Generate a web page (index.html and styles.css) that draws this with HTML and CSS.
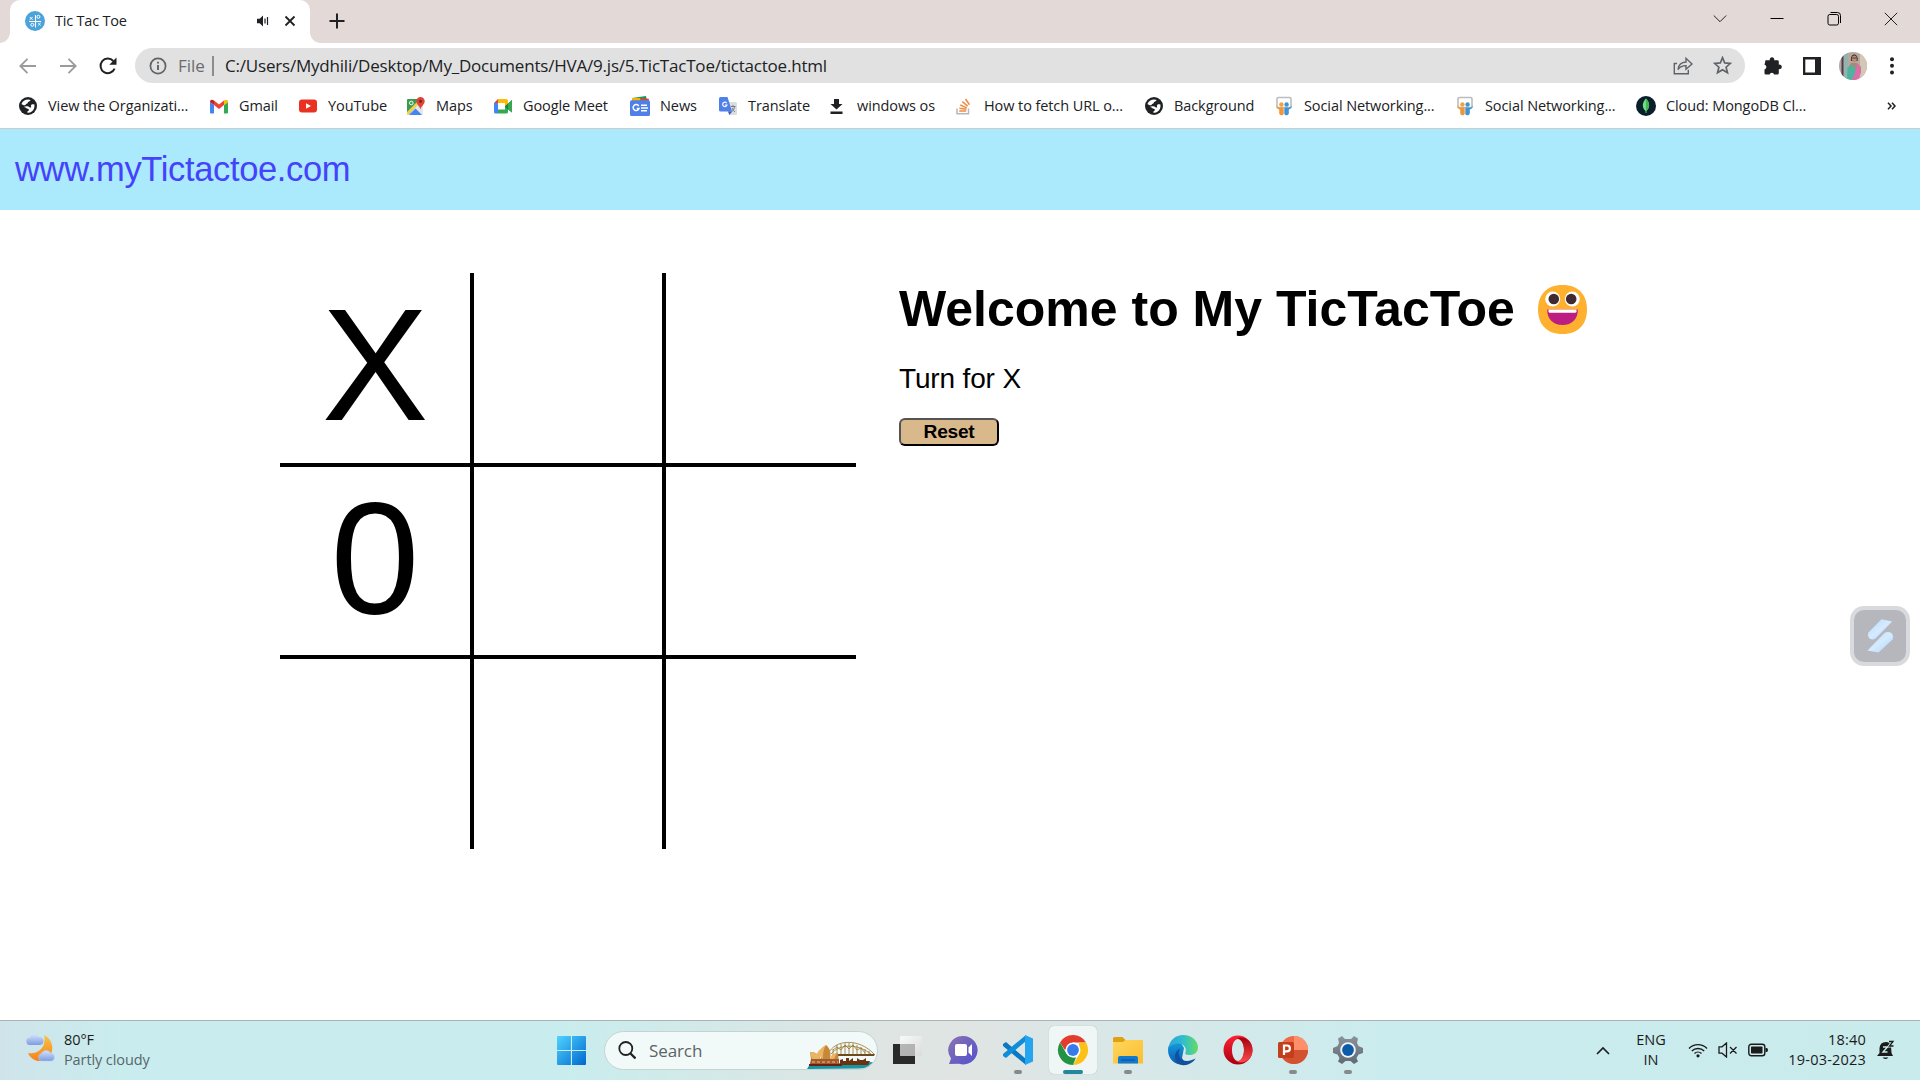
FILE: index.html
```html
<!DOCTYPE html>
<html lang="en">
<head>
<meta charset="utf-8">
<title>Tic Tac Toe</title>
<link rel="stylesheet" href="styles.css">
</head>
<body>
<svg class="defs" aria-hidden="true">
  <defs>
    <symbol id="globe" viewBox="0 0 18 18"><circle cx="9" cy="9" r="9" fill="#202124"/><path fill="#fff" d="M5.3 3.4C7 2.4 9.8 1.900 11.600 3c-.5 1.400-1.700 1.600-2.500 1.900-.5.700-.300 1.500-1.300 1.800C6.500 7 6.700 8.200 5.900 8.300 4.600 8.400 3 7.300 2.500 6.900c.5-1.400 1.500-2.700 2.800-3.500zM15.400 7.600c.600 2.800-.7 5.900-3 7.100-1 .7-2.500 1.200-4 1.100-.2-1.100.4-2 1.500-2.200.3-.8-.2-1.500-1.100-1.800-1.700-.3-2-1.900-4-1.900 1-.8 3-1 4.600-.4 1 .4 1.400 1.300 2.600 1 .6-.8-.3-1.300-.1-2.100.6-1 2.300-1.300 3.500-.8z"/></symbol>
    <symbol id="slides" viewBox="0 0 18 20"><rect x="2" y="1.500" width="14" height="10" rx="1.500" fill="#fff" stroke="#bdbdbd" stroke-width="1.600"/><circle cx="6.400" cy="8.500" r="2.200" fill="#f0a33c"/><circle cx="11.600" cy="8.500" r="2.200" fill="#3f94d1"/><path fill="#f0963a" d="M1 9.500c1 2 3 2.300 5 2.100h2.700V18c-1 2-4 1.500-4.500-.5v-4C2.500 13 1 12 1 9.500z"/><path fill="#3f94d1" d="M17 9.500c-1 2-3 2.300-5 2.100H9.300V18c1 2 4 1.500 4.500-.5v-4c1.700-.5 3.200-1.500 3.200-4z"/></symbol>
    <linearGradient id="win" x1="0" y1="0" x2="1" y2="1"><stop offset="0" stop-color="#4fd3ff"/><stop offset="1" stop-color="#0068ce"/></linearGradient>
    <linearGradient id="moon" x1="0" y1="0" x2="0" y2="1"><stop offset="0" stop-color="#f7c443"/><stop offset="1" stop-color="#f5821f"/></linearGradient>
    <linearGradient id="cloud" x1="0" y1="0" x2="0" y2="1"><stop offset="0" stop-color="#d3e1fb"/><stop offset="1" stop-color="#7d9ce0"/></linearGradient>
    <linearGradient id="pane" x1="0" y1="0" x2="1" y2="1"><stop offset="0" stop-color="#fff"/><stop offset="1" stop-color="#d9d9d9"/></linearGradient>
    <linearGradient id="chat" x1="0" y1="0" x2="1" y2="1"><stop offset="0" stop-color="#9373b8"/><stop offset=".35" stop-color="#7467b9"/><stop offset="1" stop-color="#5450cf"/></linearGradient>
    <linearGradient id="fold" x1="0" y1="0" x2="1" y2="1"><stop offset="0" stop-color="#ffd75e"/><stop offset="1" stop-color="#fbbd2f"/></linearGradient>
    <linearGradient id="edgeTop" x1="0" y1="0" x2="1" y2="0"><stop offset="0" stop-color="#2da2d8"/><stop offset=".5" stop-color="#30bdd0"/><stop offset="1" stop-color="#64dc61"/></linearGradient>
    <linearGradient id="edgeLow" x1="0" y1="0" x2="0" y2="1"><stop offset="0" stop-color="#159cdb"/><stop offset="1" stop-color="#0a5ab4"/></linearGradient>
    <linearGradient id="opera" x1="0" y1="0" x2="0" y2="1"><stop offset="0" stop-color="#ff2235"/><stop offset="1" stop-color="#a7000f"/></linearGradient>
    <linearGradient id="opera2" x1="0" y1="0" x2="0" y2="1"><stop offset="0" stop-color="#a3000b"/><stop offset="1" stop-color="#ff4b4c"/></linearGradient>
    <linearGradient id="gear" x1="0" y1="0" x2="0" y2="1"><stop offset="0" stop-color="#8a929b"/><stop offset="1" stop-color="#606a74"/></linearGradient>
    <linearGradient id="bolt" x1="0" y1="0" x2="1" y2="1"><stop offset="0" stop-color="#b5dcff"/><stop offset=".5" stop-color="#d5ebff"/><stop offset="1" stop-color="#aed2fa"/></linearGradient>
  </defs>
</svg>

<header class="browser">
  <div class="tabstrip">
    <div class="tab">
      <svg class="favicon" viewBox="0 0 20 20"><circle cx="10" cy="10" r="10" fill="#4ba3db"/><path d="M10.500 4v12.500M4 10.500h12" stroke="#fff" stroke-width="1.100"/><path d="M4.800 6l2.800 2.800M7.600 6L4.800 8.800M13.200 12l2.400 2.400m0-2.400l-2.400 2.400" stroke="#fff"/><circle cx="13.400" cy="5.800" r="1.500" fill="none" stroke="#fff"/><circle cx="7.300" cy="13.800" r="1.500" fill="none" stroke="#fff"/></svg>
      <span class="tab-title">Tic Tac Toe</span>
      <svg class="sound" viewBox="0 0 14 14"><path fill="#202124" d="M1 4.800h2.700L7 1.500v11L3.700 9.300H1z"/><path d="M9 4.500v5M11.500 3v8" stroke="#202124" stroke-width="1.200"/></svg>
      <svg class="close" viewBox="0 0 12 12"><path d="M1.500 1.500l9 9m0-9l-9 9" stroke="#202124" stroke-width="1.800"/></svg>
    </div>
    <svg class="newtab" viewBox="0 0 16 16"><path d="M8 .5v15M.5 8h15" stroke="#202124" stroke-width="2"/></svg>
    <div class="winctl">
      <svg viewBox="0 0 14 14"><path d="M.8 3.500L7 9.700l6.200-6.200" fill="none" stroke="#222" stroke-width="1"/></svg>
      <svg viewBox="0 0 14 14"><path d="M.5 6.500h13" stroke="#000"/></svg>
      <svg viewBox="0 0 14 14"><rect x="1" y="2.500" width="10.500" height="10.500" rx="1.800" fill="none" stroke="#000"/><path d="M3.500.5h7q3 0 3 3v7.500" fill="none" stroke="#000"/></svg>
      <svg viewBox="0 0 14 14"><path d="M.8.8l12.400 12.400M13.200.8L.8 13.200" stroke="#222"/></svg>
    </div>
  </div>

  <div class="toolbar">
    <div class="nav">
      <svg viewBox="0 0 18 18"><path d="M17 9H1.800M8.500 1.800L1.300 9l7.200 7.200" fill="none" stroke="#9b9b9b" stroke-width="1.800"/></svg>
      <svg viewBox="0 0 18 18"><path d="M1 9h15.200M9.500 1.800L16.700 9l-7.200 7.200" fill="none" stroke="#9b9b9b" stroke-width="1.800"/></svg>
      <svg viewBox="0 0 18 18"><path d="M15.600 11.700A7.300 7.300 0 1 1 14.300 4" fill="none" stroke="#202124" stroke-width="2"/><path fill="#202124" d="M17.500.6v7.200h-7.200z"/></svg>
    </div>
    <div class="omnibox">
      <svg class="info" viewBox="0 0 18 18"><circle cx="9" cy="9" r="7.600" fill="none" stroke="#5f6368" stroke-width="1.700"/><path d="M9 8v5M9 4.800v1.800" stroke="#5f6368" stroke-width="1.900"/></svg>
      <span class="scheme">File</span>
      <span class="divider"></span>
      <span class="url">C:/Users/Mydhili/Desktop/My_Documents/HVA/9.js/5.TicTacToe/tictactoe.html</span>
      <svg class="share" viewBox="0 0 20 19"><path d="M4 7.500H1.300v10.300h14v-4" fill="none" stroke="#5f6368" stroke-width="1.400"/><path d="M5 13.500c.6-5 3.500-7.300 8-7.500V2.300L19 8l-6 5.300V9.600c-3.500 0-6 1-8 3.900z" fill="none" stroke="#5f6368" stroke-width="1.400"/></svg>
      <svg class="star" viewBox="0 0 18 18"><path d="M9 1.600l2.100 5 5.400.4-4.100 3.600 1.300 5.300L9 13l-4.700 2.900 1.300-5.300L1.500 7l5.400-.4z" fill="none" stroke="#5f6368" stroke-width="1.600"/></svg>
    </div>
    <svg class="puzzle" viewBox="0 0 18 18"><path fill="#202124" d="M1.500 3.200h4.300a2.300 2.300 0 1 1 4.400 0h3.200q1.400 0 1.400 1.400v3.100a2.300 2.300 0 1 1 0 4.400v4q0 1.500-1.500 1.500h-3.200a2.300 2.300 0 0 0-4.500 0H1.900Q.5 17.600.5 16.200v-3.800a2.400 2.400 0 0 0 0-4.700z"/></svg>
    <svg class="panel" viewBox="0 0 18 18"><path fill="#202124" d="M0 0h18v18H0zM2.300 2.500v13H12v-13z" fill-rule="evenodd"/></svg>
    <svg class="avatar" viewBox="0 0 28 28"><clipPath id="av"><circle cx="14" cy="14" r="14"/></clipPath><g clip-path="url(#av)"><path fill="#b9a99c" d="M0 0h28v28H0z"/><path fill="#8fb5ac" d="M5 0h4v28H5z"/><path fill="#4d3c55" d="M2.500 0h2v28h-2z"/><path fill="#d3c7b8" d="M21 0h7v28h-7z"/><path fill="#a58a7c" d="M9 16l3-5h6l4 4v5H9z"/><path fill="#4db3a0" d="M8 28l.5-12 3.500-3 4 2 1 13z"/><path fill="#e06ba7" d="M13 28l4-10 1-6 3 2 1 7-3 7z"/><path fill="#33272a" d="M12 9c-1-9 8-8 6.500 0z"/><ellipse cx="15.300" cy="6.800" rx="2.600" ry="3.400" fill="#b98a76"/><path d="M12.500 6h5.500" stroke="#443338" stroke-width=".8"/></g></svg>
    <svg class="menu" viewBox="0 0 4 18"><g fill="#202124"><circle cx="2" cy="2.200" r="2"/><circle cx="2" cy="8.800" r="2"/><circle cx="2" cy="15.400" r="2"/></g></svg>
  </div>

  <nav class="bookmarks">
    <a class="bm"><svg viewBox="0 0 18 18"><use href="#globe"/></svg>View the Organizati...</a>
    <a class="bm"><svg viewBox="0 0 18 18"><path fill="#4285f4" d="M0 5l4 3v8.500H1.200Q0 16.500 0 15.300z"/><path fill="#34a853" d="M18 5l-4 3v8.500h2.800q1.200 0 1.200-1.200z"/><path fill="#ea4335" d="M4 3.600l5 3.800 5-3.800V8l-5 4-5-4z"/><path fill="#c5221f" d="M0 5c0-2.500 2-3 4-1.400V8L0 5z"/><path fill="#fbbc04" d="M18 5c0-2.500-2-3-4-1.400V8l4-3z"/></svg>Gmail</a>
    <a class="bm"><svg viewBox="0 0 18 18"><rect y="2.500" width="18" height="13" rx="3" fill="#ea3223"/><path fill="#fff" d="M7 6.200v5.600L12 9z"/></svg>YouTube</a>
    <a class="bm"><svg viewBox="0 0 18 18"><rect y="2" width="16" height="16" rx="1.500" fill="#e6e6e6"/><path fill="#3a9b50" d="M0 3q0-1 1-1h11v4L2 17H0z"/><path fill="#4285f4" d="M2 18l6.500-6.500L15 18z"/><path fill="#fbd04b" d="M0 15L11 4l1.500 2L1 17.700H0z"/><circle cx="4.300" cy="6" r="1.800" fill="none" stroke="#fff"/><path fill="#db4437" d="M13.500 0a4.200 4.200 0 0 1 4.200 4.200c0 3-3 4.300-4.200 8-1.200-3.700-4.200-5-4.200-8A4.200 4.200 0 0 1 13.500 0z"/><circle cx="13.500" cy="4.200" r="1.500" fill="#7b231e"/></svg>Maps</a>
    <a class="bm"><svg viewBox="0 0 18 18"><path fill="#ea4335" d="M0 6l4-4v4z"/><path fill="#fbbc04" d="M4 2h8q2 0 2 2v4l-3 1V6H4z"/><path fill="#4285f4" d="M0 6h4v10.500H1.500Q0 16.500 0 15z"/><path fill="#34a853" d="M4 12.500h7V9l3-1v7q0 1.500-2 1.500H4z"/><path fill="#188038" d="M11 9.200L18 3v12.500l-4-3.300z"/><path fill="#34a853" d="M14 7l4-4v12.500l-4-3.300z"/></svg>Google Meet</a>
    <a class="bm"><svg class="news" viewBox="0 0 20 20"><path fill="#0c9d58" d="M2 2l14-2 1 5H2z"/><path fill="#f4b400" d="M2 2h8l1 3H2z"/><path fill="#db4437" d="M11 2l8 .8L18.500 5H10z"/><rect y="4.200" width="20" height="15.800" rx="1.500" fill="#4f80ea"/><path d="M8.700 10a3 3 0 1 0 .3 2.500H6.800M11 9.300h6M11 12h7M11 14.700h6" fill="none" stroke="#fff" stroke-width="1.500"/></svg>News</a>
    <a class="bm"><svg viewBox="0 0 18 18"><path fill="#ddd" d="M7 5h9.500Q18 5 18 6.500v10q0 1.500-1.500 1.500H10z"/><path fill="#4f80ea" d="M1.500 0h7L13 14.500H1.500Q0 14.500 0 13V1.500Q0 0 1.500 0z"/><path d="M7.800 6.200A2.200 2.200 0 1 0 8 8H6" fill="none" stroke="#f7f7f7" stroke-width="1.200"/><path d="M12 9.500h4.500M14 8v1.500M12.500 15c2-1.500 2.800-3.500 3-5.500M13 11c.5 1.500 2 3 3 4" fill="none" stroke="#727d88"/><path fill="#2e5bc2" d="M9 14.500h4L10.500 18z"/></svg>Translate</a>
    <a class="bm"><svg viewBox="0 0 18 18"><path fill="#202124" d="M6 2h5v5h3.500l-6 5.500-6-5.500H6zM2.500 14.500h12V17h-12z"/></svg>windows os</a>
    <a class="bm"><svg viewBox="0 0 18 18"><path d="M2 11.500v5.300h11.500v-5.300" fill="none" stroke="#b5b7ba" stroke-width="1.500"/><path d="M4.200 14h7M4.400 11.200l7 1M5.300 8l6.500 2.900M7.300 4.700l5.400 4.500M10.500 2l4 5.800" stroke="#ee8b42" stroke-width="1.500"/></svg>How to fetch URL o...</a>
    <a class="bm"><svg viewBox="0 0 18 18"><use href="#globe"/></svg>Background</a>
    <a class="bm"><svg class="tall" viewBox="0 0 18 20"><use href="#slides"/></svg>Social Networking...</a>
    <a class="bm"><svg class="tall" viewBox="0 0 18 20"><use href="#slides"/></svg>Social Networking...</a>
    <a class="bm"><svg class="news" viewBox="0 0 20 20"><circle cx="10" cy="10" r="10" fill="#0b1e2b"/><path fill="#6ce07a" d="M10 2.500c3.200 3 5 8.500.4 12.600V17h-.8v-1.900C5 11 6.800 5.500 10 2.500z"/><path fill="#45b456" d="M10 2.500c3.200 3 5 8.500.4 12.600L10 17z"/></svg>Cloud: MongoDB Cl...</a>
    <svg class="more" viewBox="0 0 9 8"><path d="M1 .8L4 4 1 7.200M5 .8L8 4 5 7.200" fill="none" stroke="#202124" stroke-width="1.500"/></svg>
  </nav>
</header>

<main class="page">
  <div class="site-bar">www.myTictactoe.com</div>
  <div class="game">
    <div class="board">
      <div class="cell right bottom">X</div><div class="cell left right bottom"></div><div class="cell left bottom"></div>
      <div class="cell right top bottom">0</div><div class="cell left right top bottom"></div><div class="cell left top bottom"></div>
      <div class="cell right top"></div><div class="cell left right top"></div><div class="cell left top"></div>
    </div>
    <section class="status">
      <h1>Welcome to My TicTacToe
        <svg class="emoji" viewBox="0 0 49 49"><path fill="#ffb02e" d="M24.500 0C41 0 49 10.500 49 24.500S41 49 24.500 49 0 38.500 0 24.500 8 0 24.500 0z"/><circle cx="14.700" cy="14" r="7.500" fill="#fff"/><circle cx="34.300" cy="14" r="7.500" fill="#fff"/><circle cx="15.800" cy="14" r="5.300" fill="#402a32"/><circle cx="33.200" cy="14" r="5.300" fill="#402a32"/><path fill="#bb1d80" d="M9.200 24.500h30.600C40 34 34 40 24.500 40S9 34 9.200 24.500z"/><path fill="#fff" d="M10.500 24.500h28v2q0 1.200-1.500 1.200H12q-1.500 0-1.500-1.200z"/></svg>
      </h1>
      <p class="turn">Turn for X</p>
      <button class="reset">Reset</button>
    </section>
  </div>
  <svg class="widget" viewBox="0 0 60 60"><rect width="60" height="60" rx="14" fill="#d9dade"/><rect x="4" y="4" width="52" height="52" rx="10" fill="#b6b7bd"/><path fill="url(#bolt)" d="M31.500 13.300l10.700 2.200L26 32c-5 4-9.500-1-7.500-5.500z"/><path fill="url(#bolt)" d="M28.500 46.500l-11-2L34 27.500c5-4 11 .5 8.500 6z"/></svg>
</main>

<footer class="taskbar">
  <div class="weather">
    <svg viewBox="0 0 30 28"><path fill="url(#moon)" d="M19 1c12 6 11 23-3 26-6 .5-11-3-13-8 10 2 19-6 16-18z"/><path fill="url(#cloud)" d="M4 11a3.800 3.800 0 0 1 .5-7.400A5.500 5.500 0 0 1 14 3a4 4 0 0 1 1 8z"/><path fill="url(#cloud)" stroke="#b9cbf2" stroke-width=".5" d="M16 27a4 4 0 0 1 .3-7.500 5.500 5.500 0 0 1 9.700-.3 4 4 0 0 1 .5 7.800z"/></svg>
    <div><div class="temp">80°F</div><div class="cond">Partly cloudy</div></div>
  </div>
  <svg class="start" viewBox="0 0 29 29"><path fill="url(#win)" d="M1 0h12.900v13.900H0V1q0-1 1-1zM15 0h13q1 0 1 1v12.900H15zM0 15h13.900v14H1q-1 0-1-1zM15 15h14v13q0 1-1 1H15z"/></svg>
  <div class="search">
    <svg class="lens" viewBox="0 0 18 18"><circle cx="7.800" cy="7.500" r="6.500" fill="none" stroke="#222" stroke-width="1.800"/><path d="M12.500 12.500l5 5" stroke="#222" stroke-width="2.300"/></svg>
    <span>Search</span>
    <svg class="opera-house" viewBox="0 0 69 28"><path fill="#1695a3" d="M3 23l66-2q-4 5-13 6.500L0 28z"/><path d="M21 13C28-2 52-3 67 13M24 13C32 3 50 2 64 13M26 8v6M30 4v10M34 3v11M38 2v12M42 2v12M46 2v12M50 4v10M54 6v8M58 8v6M62 10v4M26 9l4-3 4 3 4-5 4 4 4-4 4 5 4-2 4 5" fill="none" stroke="#98752f" stroke-width=".8"/><path fill="#6c4b1d" d="M26 13h42l-1 2H26z"/><path fill="#6b3310" d="M33 24v-5l3-1v2h3v-3h3v3l4-3v3h4v-3l3 2h3l3-2v3h4l-2 4z"/><path fill="#c98835" d="M4 22v-4l-1-7c6 0 10 3 11 8 0-8 1-12 5-15 5 4 5 9 4 15 2-4 4-7 8-7l1 10z"/><path fill="#e9b463" d="M3 11c6 0 9 3 10 7H5zM10 13c1-3 5-7 9-9-3 5-3 10-3 14zM23 18c1-4 4-6 7-6l-3 6z"/><path fill="#a15a2b" d="M4 18h28v5H3z"/><path stroke="#f1bd7d" d="M5 21h26" stroke-dasharray="3 2"/><path fill="#6b1f16" d="M2 23h33v2H2z"/></svg>
  </div>
  <div class="apps">
    <div class="app"><svg viewBox="0 0 32 32"><path fill="#2a2a2a" d="M1 10h22v20H1z"/><rect x="8" y="2" width="22" height="20" rx="1" fill="url(#pane)" opacity=".8"/><path fill="#aaa" d="M8 10h15v12H8z" opacity=".65"/></svg></div>
    <div class="app"><svg viewBox="0 0 32 32"><path fill="url(#chat)" d="M16 2a14.200 14.200 0 1 1-4 27.700L2 30l2-5.500A14.200 14.200 0 0 1 16 2z"/><rect x="8" y="10" width="12" height="12" rx="2" fill="#fff"/><path fill="#fff" d="M21.500 13.500L25 10v12l-3.500-3.500z"/></svg></div>
    <div class="app running"><svg viewBox="0 0 32 32"><path fill="#0879c2" d="M1 10l3-2 20 17v6L1 12z"/><path fill="#0f8dd8" d="M1 22l3 2L24 7V1L1 20z"/><path fill="#25a4f2" d="M23 1l8 3.500v23L23 31z"/></svg></div>
    <div class="app running active"><svg viewBox="0 0 32 32"><path fill="#e33b2e" d="M3 8.500A15 15 0 0 1 29 8.500H16L8 16z"/><path fill="#fbc116" d="M29 8.500A15 15 0 0 1 16 31l6.500-11.500L22 8.500z"/><path fill="#229342" d="M3 8.500l6.500 11.300L16 23.500h3L16 31A15 15 0 0 1 3 8.500z"/><circle cx="16" cy="16" r="7.500" fill="#fff"/><circle cx="16" cy="16" r="5.900" fill="#367bed"/></svg></div>
    <div class="app running"><svg viewBox="0 0 32 32"><path fill="#e0a010" d="M1 4.500Q1 3 2.500 3h8l3 3H31v8H1z"/><path fill="url(#fold)" d="M1 8h10l2.500-2H31v23.500H1z"/><path fill="#1279ce" d="M6 29.500V24q0-2 2-2h16q2 0 2 2v5.500z"/><path d="M9 26h14" stroke="#0a4f9a"/></svg></div>
    <div class="app"><svg viewBox="0 0 32 32"><path fill="url(#edgeLow)" d="M1 16C1 9 8 7 14 9l3 5-2 10 4 6.500C9 32 1 26 1 16z"/><path fill="url(#edgeTop)" d="M1 16C2 6 9 1 16 1c9 0 15 6 15 12.500 0 5-4 7.500-8.500 7.500-3 0-5-1-4-2.800C20 15 17 9 11 9.500 6 10 2 12 1 16z"/><path fill="#12509c" d="M13 14.500c-5 9 4 16.500 15.500 10C26 29 20 32 15 31 6 29 6 18 13 14.500z"/></svg></div>
    <div class="app"><svg viewBox="0 0 32 32"><path fill="url(#opera)" fill-rule="evenodd" d="M16 1.500a14.500 14.500 0 1 1 0 29 14.500 14.500 0 0 1 0-29zM16 5c-3.500 0-6 5-6 11s2.500 11 6 11 6-5 6-11-2.500-11-6-11z"/><path fill="url(#opera2)" d="M14 4.700c7-3.700 16.500 1.300 16.500 11.300S21 31 14 27.200c4 1.200 8-4 8-11.200s-4-12.500-8-11.300z"/></svg></div>
    <div class="app running"><svg viewBox="0 0 32 32"><circle cx="17" cy="16" r="14" fill="#ed6c47"/><path fill="#ff8f6b" d="M17 2a14 14 0 0 1 14 14H17z"/><path fill="#d35230" d="M3 16h28a14 14 0 0 1-28 0z"/><rect x="1" y="8" width="16" height="16" rx="1.500" fill="#c43e1c"/><path d="M7 21v-9.500h3a2.800 2.800 0 0 1 0 5.800H7" fill="none" stroke="#fff" stroke-width="2.200"/></svg></div>
    <div class="app running"><svg viewBox="0 0 32 32"><path fill="url(#gear)" d="M13 5l-3-3-4 2.500 1 4.500-1.500 3L1 14v5l4.500 1.500L7.500 24 6 27.500l4 2.500 3.500-3h5l3.500 3 4-2.500L24.500 24l2-3.500L31 19v-5l-4.500-2L25 9l1-4.500L22 2l-3 3z"/><circle cx="16" cy="16" r="7.800" fill="#f1f4f6"/><circle cx="16" cy="16" r="5.900" fill="#0b5ba9"/></svg></div>
  </div>
  <div class="tray">
    <svg class="chev" viewBox="0 0 14 9"><path d="M1 8l6-6 6 6" fill="none" stroke="#1b1b1b" stroke-width="1.600"/></svg>
    <div class="lang"><div>ENG</div><div>IN</div></div>
    <svg class="wifi" viewBox="0 0 20 16"><path d="M1 6.500a12.500 12.500 0 0 1 18 0M3.800 9a8.800 8.800 0 0 1 12.400 0M6.500 11.600a5 5 0 0 1 7 0" fill="none" stroke="#1b1b1b" stroke-width="1.400"/><circle cx="10" cy="13.800" r="1.600" fill="#1b1b1b"/></svg>
    <svg class="mute" viewBox="0 0 20 16"><path d="M1 4.800h3L8.500 1v14L4 11.200H1zM12 5l6.500 6.500m0-6.500L12 11.500" fill="none" stroke="#1b1b1b" stroke-width="1.300"/></svg>
    <svg class="battery" viewBox="0 0 20 14"><rect x=".8" y="1.300" width="16" height="11.400" rx="2.500" fill="none" stroke="#1b1b1b" stroke-width="1.400"/><rect x="3" y="3.500" width="11.500" height="7" rx=".7" fill="#1b1b1b"/><path fill="#1b1b1b" d="M17.500 5h1q1.500 0 1.500 2t-1.500 2h-1z"/></svg>
    <div class="clock"><div>18:40</div><div>19-03-2023</div></div>
    <svg class="bell" viewBox="0 0 18 20"><path fill="#1b1b1b" d="M2.500 8Q3 2 9 2q4 0 5 4l.500 7 1.500 3H0l2.500-3zM5.500 17.500h6q-3 3-6 0z"/><path d="M6 7h4.500L6 12h4.500" fill="none" stroke="#c9ebec" stroke-width="1.400"/><path d="M12 1.500h4L12.500 6h4" fill="none" stroke="#c9ebec" stroke-width="3"/><path d="M12 1.500h4L12.500 6h4" fill="none" stroke="#1b1b1b" stroke-width="1.300"/></svg>
  </div>
</footer>
</body>
</html>
```

FILE: styles.css
```css
* { box-sizing: border-box; }

body {
  margin: 0;
  width: 1920px;
  height: 1080px;
  overflow: hidden;
  display: flex;
  flex-direction: column;
  background: #fff;
  font-family: "Open Sans", "Noto Sans", sans-serif;
  font-stretch: 92%;
  color: #202124;
}

svg { display: block; flex: none; }
.defs { position: absolute; width: 0; height: 0; }

/* Browser frame */
.browser { height: 129px; border-bottom: 1px solid #cfcbc8; flex: none; }

.tabstrip {
  height: 43px;
  background: #e3dad7;
  display: flex;
  padding-left: 10px;
}

.tab {
  position: relative;
  width: 300px;
  height: 43px;
  background: #fff;
  border-radius: 10px 10px 0 0;
  display: flex;
  align-items: center;
  padding: 0 14px 1px 15px;
}
.tab::before, .tab::after {
  content: "";
  position: absolute;
  bottom: 0;
  width: 10px;
  height: 10px;
}
.tab::before { left: -10px; background: radial-gradient(circle at 0 0, transparent 9.5px, #fff 10px); }
.tab::after { right: -10px; background: radial-gradient(circle at 100% 0, transparent 9.5px, #fff 10px); }

.favicon { width: 20px; height: 20px; margin-right: 10px; }
.tab-title { font-size: 14.5px; line-height: 20px; padding-bottom: 1px; letter-spacing: -0.2px; flex: 1; }
.sound { width: 14px; height: 14px; margin-right: 14px; }
.close { width: 12px; height: 12px; }
.newtab { width: 16px; height: 16px; margin: 13px 0 0 19px; }

.winctl { display: flex; gap: 43px; margin: 12px 22px 0 auto; }
.winctl svg { width: 14px; height: 14px; }

.toolbar { height: 45px; display: flex; align-items: center; padding: 0 26px 0 19px; }
.nav { display: flex; gap: 22px; width: 116px; }
.nav svg { width: 18px; height: 18px; }

.omnibox {
  width: 1610px;
  height: 35px;
  border-radius: 18px;
  background: #e1e1e1;
  display: flex;
  align-items: center;
  padding: 0 13px 0 14px;
}
.info { width: 18px; height: 18px; }
.scheme { font-size: 17px; color: #6a6d70; margin-left: 11px; width: 34px; white-space: nowrap; }
.divider { width: 2px; height: 20px; background: #8b8d8f; }
.url { font-size: 17px; letter-spacing: -0.2px; margin-left: 11px; flex: 1; white-space: nowrap; }
.share { width: 20px; height: 19px; margin-right: 20px; }
.star { width: 19px; height: 19px; }
.puzzle { width: 18px; height: 18px; margin-left: 19px; }
.panel { width: 18px; height: 18px; margin-left: 21px; }
.avatar { width: 28px; height: 28px; margin-left: 18px; }
.menu { width: 4px; height: 18px; margin-left: auto; }

.bookmarks {
  height: 35px;
  padding: 0 24px 0 19px;
  display: grid;
  grid-template-columns: 191px 89px 108px 87px 137px 88px 109px 127px 190px 130px 181px 181px 1fr 9px;
  align-items: center;
  font-size: 14.5px;
  line-height: 19px;
  letter-spacing: -0.09px;
}
.bm { display: flex; align-items: center; white-space: nowrap; }
.bm svg { width: 18px; height: 18px; margin-right: 11px; }
.bm svg.news { width: 20px; height: 20px; margin: 0 10px 0 -1px; }
.bm svg.tall { height: 20px; }
.more { width: 9px; height: 8px; }

/* Page */
.page {
  position: relative;
  flex: 1;
  font-family: "Liberation Sans", Arial, sans-serif;
  color: #000;
}
.site-bar {
  height: 81px;
  background: #abeafc;
  color: #4542fc;
  font-size: 34.5px;
  letter-spacing: -0.35px;
  line-height: 80px;
  padding-left: 15px;
}
.game { display: flex; padding: 63px 0 0 280px; }
.board {
  display: grid;
  grid-template: repeat(3, 192px) / repeat(3, 192px);
}
.cell {
  display: flex;
  align-items: center;
  justify-content: center;
  padding-bottom: 6px;
  font-size: 160px;
  line-height: 1.15;
  border: 0 solid #000;
}
.cell.left { border-left-width: 2px; }
.cell.right { border-right-width: 2px; }
.cell.top { border-top-width: 2px; }
.cell.bottom { border-bottom-width: 2px; }

.status { margin: 8px 0 0 43px; }
h1 {
  display: flex;
  align-items: center;
  gap: 23px;
  height: 56px;
  margin: 0;
  font-size: 50px;
  white-space: nowrap;
}
.emoji { width: 49px; height: 49px; }
.turn { margin: 26px 0 0; font-size: 28px; letter-spacing: -0.15px; line-height: 32px; }
.reset {
  display: block;
  margin-top: 23px;
  width: 100px;
  height: 28px;
  padding: 0;
  border: 2px outset #000;
  border-radius: 6px;
  background: #d9b88c;
  font: bold 19.2px/22px "Liberation Sans", Arial, sans-serif;
  letter-spacing: -0.3px;
  color: #000;
}
.widget { position: absolute; left: 1850px; top: 477px; width: 60px; height: 60px; }

/* Taskbar */
.taskbar {
  flex: none;
  height: 60px;
  border-top: 1px solid #a9b4b6;
  background: linear-gradient(90deg, #cfe4ea 0, #c9edee 130px, #c9edee 560px, #dde5e3 850px, #e0e5e3 960px, #d6e8e9 1180px, #cbecee 1380px, #c9ebec 100%);
  display: flex;
  align-items: center;
  padding-bottom: 1px;
}
.weather { width: 557px; padding-left: 25px; display: flex; gap: 9px; align-items: center; font-size: 14.5px; line-height: 20px; letter-spacing: -0.1px; }
.weather > div { margin-top: -1px; }
.weather svg { width: 30px; height: 28px; margin-top: -4px; }
.temp { color: #1b1b1b; }
.cond { color: #56676a; }
.start { width: 29px; height: 29px; }
.search {
  width: 274px;
  height: 39px;
  margin-left: 18px;
  border-radius: 20px;
  background: #f2f9f9;
  border: 1px solid #c6d3d3;
  display: flex;
  align-items: center;
  padding-left: 13px;
  overflow: hidden;
}
.search span { font-size: 17px; letter-spacing: -0.1px; color: #5b6464; margin-left: 13px; flex: 1; }
.lens { width: 18px; height: 18px; }
.opera-house { width: 69px; height: 28px; margin: 10px 1px 0 0; }

.apps { display: flex; gap: 7px; margin-left: 6px; }
.app {
  position: relative;
  width: 48px;
  height: 48px;
  border-radius: 5px;
  display: flex;
  align-items: center;
  justify-content: center;
}
.app svg { width: 32px; height: 32px; }
.app.active { background: #f0f5f5; box-shadow: 0 0 1px #9aa; }
.app.running::after {
  content: "";
  position: absolute;
  left: 20px;
  bottom: 0;
  width: 8px;
  height: 4px;
  border-radius: 2px;
  background: #868a8b;
}
.app.active::after { left: 14px; width: 20px; background: #23899a; }

.tray { flex: 1; display: flex; align-items: center; justify-content: flex-end; padding-right: 25px; font-size: 14.5px; line-height: 20px; color: #1b1b1b; }
.chev { width: 14px; height: 9px; margin-right: 26px; }
.lang { width: 30px; text-align: center; margin-right: 22px; }
.wifi { width: 20px; height: 16px; margin-right: 10px; }
.mute { width: 20px; height: 16px; margin-right: 10px; }
.battery { width: 20px; height: 14px; margin-right: 20px; }
.clock { width: 78px; text-align: right; white-space: nowrap; letter-spacing: 0.2px; margin: -1px 11px 0 0; }
.bell { width: 18px; height: 20px; }
```
